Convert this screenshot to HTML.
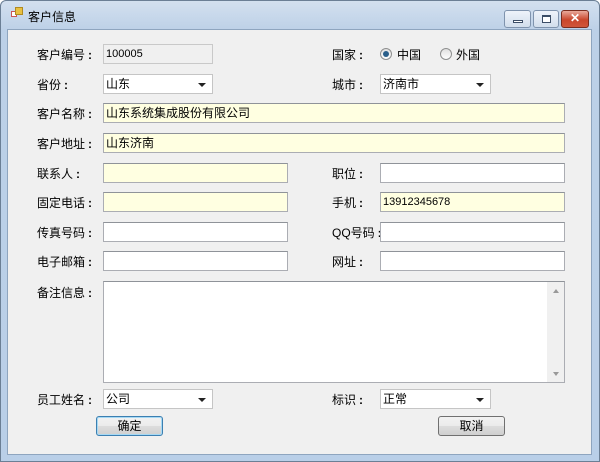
<!DOCTYPE html>
<html><head><meta charset="utf-8"><style>
*{margin:0;padding:0;box-sizing:border-box}
body{width:600px;height:462px;overflow:hidden;background:#fff;font-family:"Liberation Sans","Noto Sans CJK SC","WenQuanYi Zen Hei",sans-serif;font-size:12px;color:#000}
.win{position:absolute;left:0;top:0;width:600px;height:462px;background:linear-gradient(#d3e0ef,#bcd0e7 30px,#b9cfe8);border:1px solid #6b7f95;border-radius:6px 6px 0 0}
.client{position:absolute;left:7px;top:29px;width:585px;height:426px;background:#f0f0f0;border:1px solid #8ea5bf}
.t{position:absolute;white-space:nowrap;line-height:14px}
.t b{font-weight:bold;margin-left:3px}
.box{position:absolute;height:20px;border:1px solid #abadb3;border-top-color:#8f9399;background:#fff;padding:3px 2px;line-height:13px;white-space:nowrap}
.y{background:#ffffe1}
.ro{background:#f0f0f0;border-color:#c9c9c9}
.cb{position:absolute;height:20px;border:1px solid #c5c5c5;background:#fff;padding:3px 2px;line-height:13px}
.cb:after{content:"";position:absolute;right:6px;top:8px;border:4px solid transparent;border-top:4px solid #222;border-bottom:0}
.btn{position:absolute;height:20px;border:1px solid #707070;border-radius:3px;background:linear-gradient(#f2f2f2,#ebebeb 50%,#dddddd 51%,#cfcfcf);text-align:center;line-height:18px}
.radio{position:absolute;width:12px;height:12px;border-radius:50%;border:1px solid #8e8f8f;background:linear-gradient(#e0e0e0,#fff)}
.wb{position:absolute;top:9px;height:18px;border:1px solid #7f93ad;border-radius:3px}
</style></head><body>
<div class="win">
  <div style="position:absolute;left:10px;top:10px;width:6px;height:6px;border:1px solid #c55;background:#fff"></div>
  <div style="position:absolute;left:14px;top:6px;width:8px;height:8px;background:#e8c040;border:1px solid #b08a20"></div>
  <div class="t" style="left:27px;top:9px">客户信息</div>
  <div class="wb" style="left:503px;width:27px;background:linear-gradient(#eef3fa,#d2deec)"><div style="position:absolute;left:8px;top:9px;width:10px;height:3px;background:#fff;border:1px solid #3b4d66"></div></div>
  <div class="wb" style="left:532px;width:26px;background:linear-gradient(#eef3fa,#d2deec)"><div style="position:absolute;left:8px;top:4px;width:9px;height:8px;border:1px solid #3b4d66;border-top-width:2px;background:#fff"></div></div>
  <div class="wb" style="left:560px;width:28px;background:linear-gradient(#e9a99b,#c9462c 55%,#d0563a);border-color:#7a2c1e;color:#fff;text-align:center;font-weight:bold;line-height:15px;font-size:12px">✕</div>
</div>
<div class="client"></div>

<div class="t" style="left:37px;top:48px">客户编号<b>:</b></div>
<div class="box ro" style="left:103px;top:44px;width:110px;font-size:11px">100005</div>
<div class="t" style="left:332px;top:48px">国家<b>:</b></div>
<div class="radio" style="left:380px;top:48px"><div style="position:absolute;left:2px;top:2px;width:6px;height:6px;border-radius:50%;background:#2a5f8a"></div></div>
<div class="t" style="left:397px;top:48px">中国</div>
<div class="radio" style="left:440px;top:48px"></div>
<div class="t" style="left:456px;top:48px">外国</div>

<div class="t" style="left:37px;top:78px">省份<b>:</b></div>
<div class="cb" style="left:103px;top:74px;width:110px">山东</div>
<div class="t" style="left:332px;top:78px">城市<b>:</b></div>
<div class="cb" style="left:380px;top:74px;width:111px">济南市</div>

<div class="t" style="left:37px;top:107px">客户名称<b>:</b></div>
<div class="box y" style="left:103px;top:103px;width:462px">山东系统集成股份有限公司</div>
<div class="t" style="left:37px;top:137px">客户地址<b>:</b></div>
<div class="box y" style="left:103px;top:133px;width:462px">山东济南</div>

<div class="t" style="left:37px;top:167px">联系人<b>:</b></div>
<div class="box y" style="left:103px;top:163px;width:185px"></div>
<div class="t" style="left:332px;top:167px">职位<b>:</b></div>
<div class="box" style="left:380px;top:163px;width:185px"></div>

<div class="t" style="left:37px;top:196px">固定电话<b>:</b></div>
<div class="box y" style="left:103px;top:192px;width:185px"></div>
<div class="t" style="left:332px;top:196px">手机<b>:</b></div>
<div class="box y" style="left:380px;top:192px;width:185px;font-size:11px">13912345678</div>

<div class="t" style="left:37px;top:226px">传真号码<b>:</b></div>
<div class="box" style="left:103px;top:222px;width:185px"></div>
<div class="t" style="left:332px;top:226px">QQ号码<b>:</b></div>
<div class="box" style="left:380px;top:222px;width:185px"></div>

<div class="t" style="left:37px;top:255px">电子邮箱<b>:</b></div>
<div class="box" style="left:103px;top:251px;width:185px"></div>
<div class="t" style="left:332px;top:255px">网址<b>:</b></div>
<div class="box" style="left:380px;top:251px;width:185px"></div>

<div class="t" style="left:37px;top:286px">备注信息<b>:</b></div>
<div class="box" style="left:103px;top:281px;width:462px;height:102px">
  <div style="position:absolute;right:0;top:0;width:17px;height:100px;background:#f0f0f0"></div>
  <div style="position:absolute;right:5px;top:7px;border:3px solid transparent;border-bottom:4px solid #999;border-top:0"></div>
  <div style="position:absolute;right:5px;bottom:6px;border:3px solid transparent;border-top:4px solid #999;border-bottom:0"></div>
</div>

<div class="t" style="left:37px;top:393px">员工姓名<b>:</b></div>
<div class="cb" style="left:103px;top:389px;width:110px">公司</div>
<div class="t" style="left:332px;top:393px">标识<b>:</b></div>
<div class="cb" style="left:380px;top:389px;width:111px">正常</div>

<div class="btn" style="left:96px;top:416px;width:67px;border-color:#3c7fb1;box-shadow:inset 0 0 0 1px #a6d9f4">确定</div>
<div class="btn" style="left:438px;top:416px;width:67px">取消</div>
</body></html>
